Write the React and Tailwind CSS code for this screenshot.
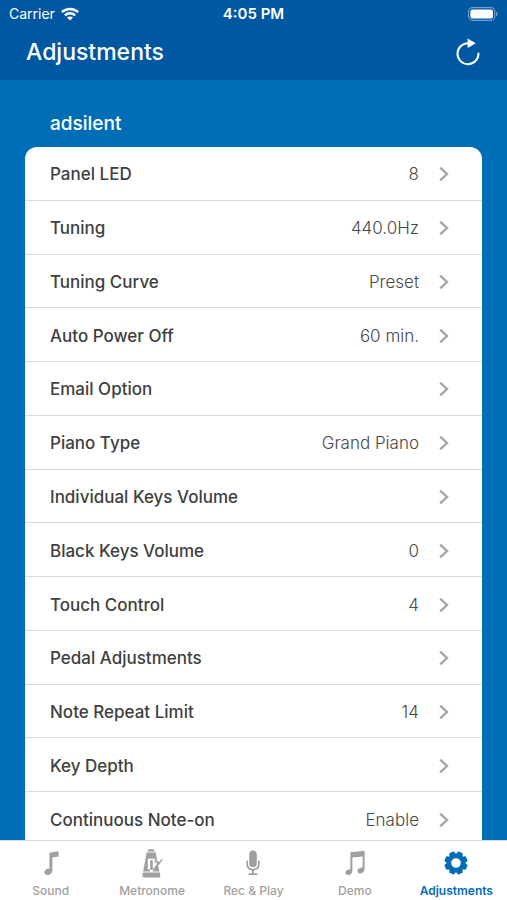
import { useState } from 'react';
import clsx from 'clsx';

const SETTINGS = [
  { id: 'panel-led', label: 'Panel LED', value: '8' },
  { id: 'tuning', label: 'Tuning', value: '440.0Hz' },
  { id: 'tuning-curve', label: 'Tuning Curve', value: 'Preset' },
  { id: 'auto-power-off', label: 'Auto Power Off', value: '60 min.' },
  { id: 'email', label: 'Email Option' },
  { id: 'piano-type', label: 'Piano Type', value: 'Grand Piano' },
  { id: 'keys-volume', label: 'Individual Keys Volume' },
  { id: 'black-keys', label: 'Black Keys Volume', value: '0' },
  { id: 'touch', label: 'Touch Control', value: '4' },
  { id: 'pedal', label: 'Pedal Adjustments' },
  { id: 'note-repeat', label: 'Note Repeat Limit', value: '14' },
  { id: 'key-depth', label: 'Key Depth' },
  { id: 'note-on', label: 'Continuous Note-on', value: 'Enable' },
];

const TABS = [
  { id: 'sound', label: 'Sound', Icon: NoteIcon },
  { id: 'metronome', label: 'Metronome', Icon: MetronomeIcon },
  { id: 'rec', label: 'Rec & Play', Icon: MicIcon },
  { id: 'demo', label: 'Demo', Icon: NotesIcon },
  { id: 'adjustments', label: 'Adjustments', Icon: GearIcon },
];

/* ── Icons ──────────────────────────────────── */

function WifiIcon() {
  return (
    <svg width="18" height="14" viewBox="0 0 18 14" fill="none" stroke="white" strokeWidth="2.5">
      <path d="M0.9 5.1C5.4 0.8 12.6 0.8 17.1 5.1" />
      <path d="M3.9 8.3C6.8 5.6 11.2 5.6 14.1 8.3" />
      <path d="M9 13.6 6 10.6C7.6 9.1 10.4 9.1 12 10.6Z" fill="white" stroke="none" />
    </svg>
  );
}

function BatteryIcon() {
  return (
    <svg width="30" height="14" viewBox="0 0 30 14">
      <rect x="0.6" y="0.6" width="26.2" height="12.8" rx="4" fill="none" stroke="white" strokeOpacity="0.45" strokeWidth="1.1" />
      <rect x="2.4" y="2.4" width="22.6" height="9.2" rx="2.2" fill="white" />
      <path d="M28 4.8C30 5.4 30 8.6 28 9.2Z" fill="white" fillOpacity="0.45" />
    </svg>
  );
}

function ReloadIcon() {
  return (
    <svg width="24" height="28" viewBox="0 0 24 28" fill="none">
      <path d="M12 5.2A10.5 10.5 0 1 0 22.5 15.6" stroke="white" strokeWidth="2" strokeLinecap="round" />
      <path d="M11.6 0.4 19.8 5.2 11.6 10Z" fill="white" />
    </svg>
  );
}

function ChevronIcon() {
  return (
    <svg width="10" height="16" viewBox="0 0 10 16" fill="none" stroke="#a6a6a6" strokeWidth="2.4">
      <path d="M1.2 1.6 8 8 1.2 14.4" />
    </svg>
  );
}

function NoteIcon() {
  return (
    <svg width="32" height="32" viewBox="0 0 32 32" fill="currentColor">
      <path d="M14.4 5.8 23.6 4.2V9.6L17.4 10.6V23.4C17.4 26 15 28 12.4 28 10.6 28 9.4 26.8 9.4 25.2 9.4 23 11.4 21.6 14.4 21.4Z" />
    </svg>
  );
}

function MetronomeIcon() {
  return (
    <svg width="32" height="32" viewBox="0 0 32 32" fill="currentColor">
      <path d="M11.2 4.6C11.8 2.8 13.4 2 15.2 2S18.6 2.8 19.2 4.6Z" />
      <path
        fillRule="evenodd"
        d="M10.6 5.6H19.8L21 14 18.8 16.8V11.8H11.8V22.4H14V24.4H7.2ZM19 19.8 21.8 16.6 23.4 24.4H16.4L18 22.4H19Z"
      />
      <path d="M14.2 13.2H16.8V22.8H14.2Z" />
      <path d="M17 23 26.4 12.4" fill="none" stroke="currentColor" strokeWidth="1.4" />
      <path d="M21.8 13.8 24.4 16 22.6 18 20 15.8Z" />
      <rect x="6.6" y="25.4" width="17.6" height="5" rx="1.2" />
    </svg>
  );
}

function MicIcon() {
  return (
    <svg width="32" height="32" viewBox="0 0 32 32" fill="currentColor">
      <rect x="12.2" y="3.6" width="7.6" height="16.6" rx="3.8" />
      <path d="M10.2 13.6V17C10.2 20.6 12.6 22.6 16 22.6S21.8 20.6 21.8 17V13.6" fill="none" stroke="currentColor" strokeWidth="1.7" />
      <path d="M15 22.4H17V26.2H19C20 26.2 20.6 26.8 20.6 28H11.4C11.4 26.8 12 26.2 13 26.2H15Z" />
    </svg>
  );
}

function NotesIcon() {
  return (
    <svg width="32" height="32" viewBox="0 0 32 32" fill="currentColor">
      <path
        fillRule="evenodd"
        d="M11.4 5.2 25.6 3.8V22C25.6 24.6 23.6 26.4 21.2 26.4 19.6 26.4 18.4 25.4 18.4 24 18.4 22 20.4 20.8 23.6 20.6V9.4L13.4 10.4V23.8C13.4 26.4 11.4 28 9.2 28 7.6 28 6.4 27 6.4 25.6 6.4 23.6 8.6 22.4 11.4 22.2Z"
      />
    </svg>
  );
}

function GearIcon() {
  const teeth = [22.5, 67.5, 112.5, 157.5, 202.5, 247.5, 292.5, 337.5];
  return (
    <svg width="32" height="32" viewBox="0 0 32 32" fill="currentColor">
      <circle cx="16" cy="16" r="7" fill="none" stroke="currentColor" strokeWidth="4.4" />
      {teeth.map((angle) => (
        <path key={angle} d="M12.4 8.2 13.2 5.2Q13.5 4.4 14.2 4.4H17.8Q18.5 4.4 18.8 5.2L19.6 8.2Z" transform={`rotate(${angle} 16 16)`} />
      ))}
    </svg>
  );
}

/* ── Parts ──────────────────────────────────── */

function SettingRow({ label, value }) {
  return (
    <li className="flex border-b border-[#dcdcdc]">
      <button className="flex flex-1 items-center pl-[25px] pr-[33px] pt-0.5 text-left text-[17px] leading-6">
        <span className="flex-1 font-medium text-[#404040]">{label}</span>
        {value && <span className="font-light text-[#484848]">{value}</span>}
        <span className="ml-5">
          <ChevronIcon />
        </span>
      </button>
    </li>
  );
}

export default function App() {
  const [activeTab, setActiveTab] = useState('adjustments');

  return (
    <div className="flex flex-col h-screen overflow-hidden bg-[#006eb7] font-['Inter',sans-serif]">

      {/* ── Header ─────────────────────────────────── */}
      <header className="shrink-0 bg-[#0058a3] text-white h-20">
        <div className="grid grid-cols-3 items-center px-[9px] h-7 text-[14px] leading-5">
          <div className="flex items-center gap-1.5">
            <span>Carrier</span>
            <WifiIcon />
          </div>
          <span className="text-center text-[15px] font-semibold">4:05 PM</span>
          <div className="flex justify-end">
            <BatteryIcon />
          </div>
        </div>
        <div className="flex items-center justify-between pl-[26px] pr-[27px] h-12">
          <h1 className="text-[23px] leading-8 font-medium">Adjustments</h1>
          <button aria-label="Reload">
            <ReloadIcon />
          </button>
        </div>
      </header>

      {/* ── Settings list ──────────────────────────── */}
      <main className="flex-1 min-h-0 overflow-y-auto [scrollbar-width:none] px-[25px] pt-8">
        <h2 className="px-[25px] mb-[11px] text-[19px] leading-6 font-medium text-white">adsilent</h2>
        <ul className="grid auto-rows-fr h-[699px] rounded-t-xl overflow-hidden bg-white">
          {SETTINGS.map((s) => (
            <SettingRow key={s.id} label={s.label} value={s.value} />
          ))}
        </ul>
      </main>

      {/* ── Tab bar ────────────────────────────────── */}
      <nav className="shrink-0 grid grid-cols-5 h-[60px] bg-white border-t border-[#dcdcdc]">
        {TABS.map(({ id, label, Icon }) => (
          <button
            key={id}
            onClick={() => setActiveTab(id)}
            className={clsx(
              'flex flex-col items-center gap-1 pt-1.5 text-[12px] leading-4 whitespace-nowrap',
              activeTab === id ? 'font-semibold text-[#006eb7]' : 'font-medium text-[#a0a0a0]'
            )}
          >
            <Icon />
            <span>{label}</span>
          </button>
        ))}
      </nav>
    </div>
  );
}
